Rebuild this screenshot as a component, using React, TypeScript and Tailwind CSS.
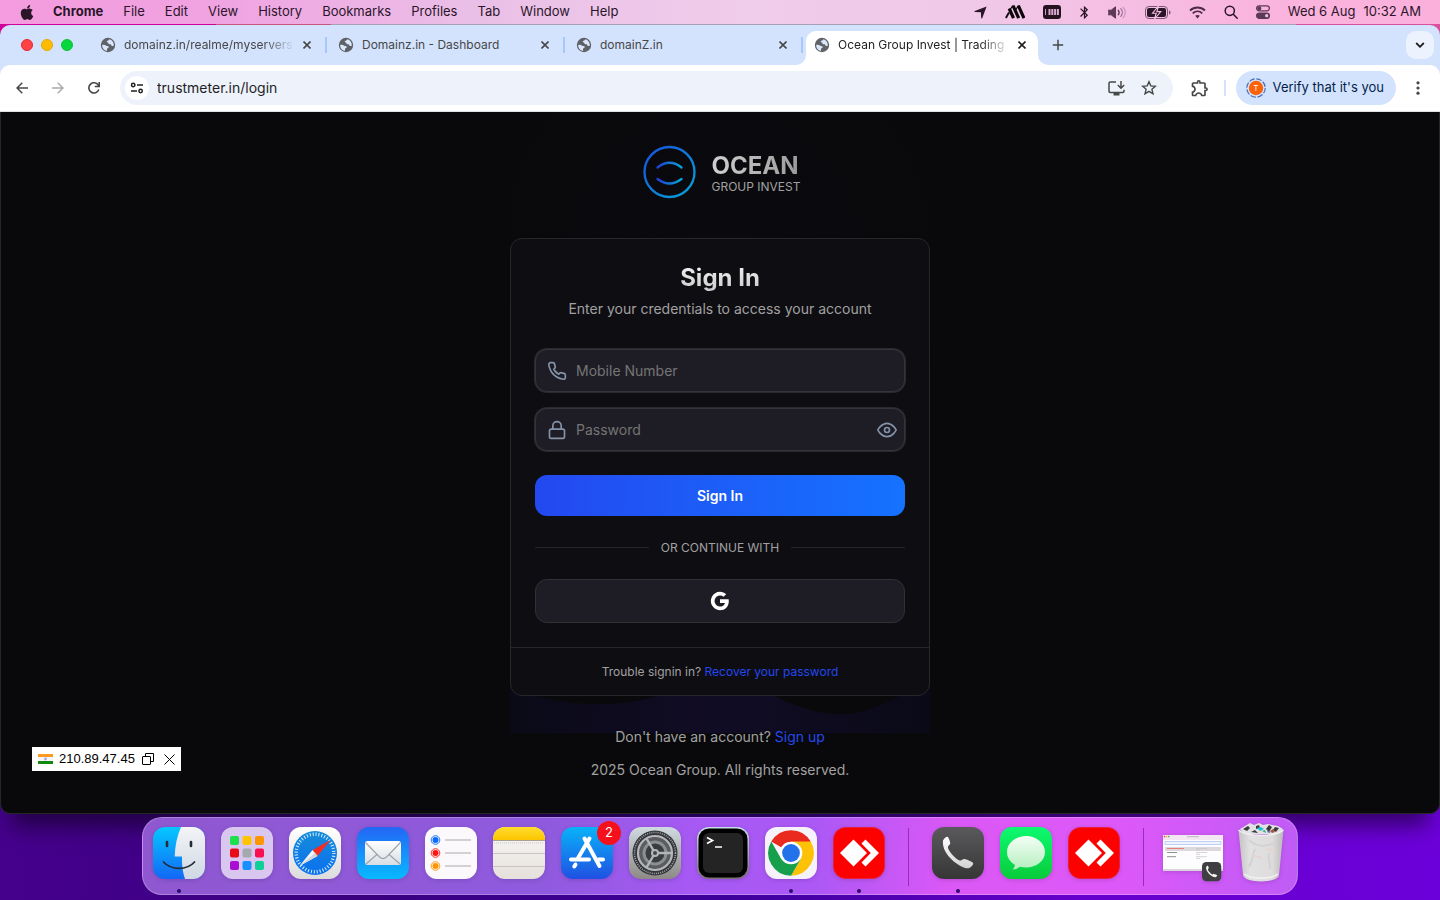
import { useState } from 'react'
import type { ReactNode } from 'react'
import { FiEye, FiLock, FiPhone } from 'react-icons/fi'
import { FaApple } from 'react-icons/fa'
import { RiGoogleFill } from 'react-icons/ri'
import { MdOutlineExtension, MdBluetooth } from 'react-icons/md'

const menus = ['File', 'Edit', 'View', 'History', 'Bookmarks', 'Profiles', 'Tab', 'Window', 'Help']

const tabs = [
  { title: 'domainz.in/realme/myservers', fade: true },
  { title: 'Domainz.in - Dashboard', fade: false },
  { title: 'domainZ.in', fade: false },
]

/* ---------- Menu bar ---------- */

const MenuBar = () => (
  <header className="flex h-6 items-center justify-between bg-[linear-gradient(90deg,#f39bde_0%,#f0a3e1_15%,#eabfe7_33%,#f0cdea_52%,#f0c8e8_68%,#fab4dd_88%,#fbb0dc_100%)] pl-5 pr-[19px] text-[13px] text-[#2b1529]">
    <nav className="flex items-center gap-5">
      <button aria-label="Apple menu" className="w-[13px]">
        <FaApple className="h-[17px] w-[14px]" />
      </button>
      <button className="font-bold">Chrome</button>
      {menus.map((item) => (
        <button key={item}>{item}</button>
      ))}
    </nav>
    <div className="flex items-center gap-[18px]">
      <svg width="13" height="13" viewBox="0 0 13 13" fill="currentColor">
        <path d="M12.6.4 8.2 12.2c-.2.6-.9.5-1-.1L6.9 6.2 1 6C.3 6 .2 5.200.8 5z" />
      </svg>
      <svg width="20" height="14" viewBox="0 0 20 14" fill="none" stroke="#0c060c">
        <path d="M4 7.500.9 13" strokeWidth="1.800" />
        <path d="m4.200 3.500 4.300 9.700M8 .7l5.700 12.500M13.300.7 19 13.200" strokeWidth="3.200" />
        <path d="M5.500 4 8 .5M10.500 5l3-4.500" strokeWidth="1.200" />
      </svg>
      <svg width="18" height="14" viewBox="0 0 18 14">
        <rect width="18" height="14" rx="3" fill="#24131f" />
        <path d="M2 4h.9v6H2zM5.500 4h2v6h-2zM8.300 4h2v6h-2zM11.100 4h2v6h-2zM13.900 4h2v6h-2z" fill="#d9a9cf" />
      </svg>
      <MdBluetooth className="-mx-[2px] h-[15px] w-[15px]" />
      <svg width="19" height="13" viewBox="0 0 19 13" fill="none" stroke="currentColor" strokeLinecap="round">
        <path d="M.5 4.200h2.700L7.500.8v11.400L3.200 8.800H.5z" fill="#5d3a57" stroke="#5d3a57" strokeLinejoin="round" />
        <path d="M10.300 4.300c1 1.300 1 3.100 0 4.400" stroke="#5d3a57" strokeWidth="1.300" />
        <path d="M12.800 2.700c2 2.200 2 5.400 0 7.600" stroke="#9b6c92" strokeWidth="1.200" />
        <path d="M15.200 1.300c2.800 3 2.800 7.400 0 10.400" stroke="#c592b9" strokeWidth="1.100" />
      </svg>
      <svg width="26" height="13" viewBox="0 0 26 13">
        <rect x=".5" y=".5" width="22" height="12" rx="3.500" fill="none" stroke="#7b5575" />
        <rect x="2" y="2" width="19" height="9" rx="2" fill="#2b1529" />
        <path d="M24 4.500v4c1.200-.4 1.500-1 1.500-2s-.3-1.600-1.500-2z" fill="#7b5575" />
        <path d="M13.500 0 7.500 7.200h3.700L9.500 13l6.300-7.400h-3.900z" fill="#2b1529" stroke="#f3bfe3" strokeWidth="1.100" />
      </svg>
      <svg width="17" height="13" viewBox="0 0 17 13" fill="none" stroke="#4a2c45" strokeWidth="1.800">
        <path d="M1 4.500c4.300-4 10.700-4 15 0" />
        <path d="M3.700 7.300c2.800-2.500 6.800-2.500 9.600 0" />
        <path d="m8.500 12.500-2.300-2.700c1.400-1.100 3.200-1.100 4.600 0z" fill="#4a2c45" stroke="none" />
      </svg>
      <svg width="14" height="14" viewBox="0 0 14 14" fill="none" stroke="currentColor" strokeWidth="1.500" strokeLinecap="round">
        <circle cx="5.800" cy="5.800" r="4.600" />
        <path d="m9.300 9.300 3.900 3.900" />
      </svg>
      <svg width="14" height="14" viewBox="0 0 14 14" fill="none" stroke="#5d3a57" strokeWidth="1.200">
        <rect x=".6" y=".8" width="12.800" height="5" rx="2.500" />
        <circle cx="3.300" cy="3.300" r="1.500" fill="#5d3a57" />
        <rect x=".6" y="8" width="12.800" height="5.400" rx="2.700" fill="#5d3a57" />
        <circle cx="10.700" cy="10.700" r="1.600" fill="#f3c3e4" stroke="none" />
      </svg>
      <time className="flex gap-2">
        <span>Wed 6 Aug</span>
        <span>10:32 AM</span>
      </time>
    </div>
  </header>
)

/* ---------- Browser chrome ---------- */

const GlobeIcon = () => (
  <svg className="shrink-0" width="16" height="16" viewBox="0 0 16 16">
    <circle cx="8" cy="8" r="7.200" fill="#5f6368" />
    <path d="M2.200 7.900c1.700-.2 3-.1 4 .8.600.6 1.800.1 2.400.8.500.7-.2 1.600-1 1.800-.8.300-.7 1.200-.5 2.500C4.200 13.500 2.100 11 2.200 7.900z" fill="#d9e6fb" />
    <path d="M9.300 2.300c-.4 1.200-1.500 1.200-2.300 1.800-.6.600.1 1.300.8 1.400.9.200.3 1.400 1.200 1.700.9.300 1.300-.4 2 .2.600.5.300 1.500 1.200 1.600.6.100 1.300-.2 1.600-.6.200-3-1.700-5.400-4.500-6.100z" fill="#d9e6fb" />
  </svg>
)

const CloseIcon = () => (
  <svg width="8" height="8" viewBox="0 0 8 8" fill="none" stroke="currentColor" strokeWidth="1.600">
    <path d="m.5.500 7 7m0-7-7 7" />
  </svg>
)

interface TabProps {
  title: string
  fade: boolean
}

const Tab = ({ title, fade }: TabProps) => (
  <div className="flex w-[238px] items-center pl-[11px] text-[#474747]">
    <GlobeIcon />
    <span
      className={`ml-2 min-w-0 flex-1 whitespace-nowrap text-xs ${
        fade ? '[mask-image:linear-gradient(to_right,black_82%,transparent)]' : ''
      }`}
    >
      {title}
    </span>
    <button aria-label="Close tab" className="ml-1 flex h-4 w-4 items-center justify-center">
      <CloseIcon />
    </button>
    <span className="ml-[10px] h-4 w-[2px] bg-[#a8c7fa]" />
  </div>
)

const TabStrip = () => (
  <div className="flex h-10 bg-[#d3e3fd] pl-[21px] pr-[6px]">
    <div className="flex w-[68px] items-center gap-2">
      <button aria-label="Close" className="h-3 w-3 rounded-full border border-[#e8252b] bg-[#ff4245]" />
      <button aria-label="Minimize" className="h-3 w-3 rounded-full border border-[#e9a600] bg-[#fdbc02]" />
      <button aria-label="Zoom" className="h-3 w-3 rounded-full border border-[#0fbf37] bg-[#05d73f]" />
    </div>
    {tabs.map((tab) => (
      <Tab key={tab.title} {...tab} />
    ))}
    <div className="relative ml-[3px] mt-[6px] flex w-[232px] items-center rounded-t-[10px] bg-white pb-[6px] pl-2 pr-2 text-[#1f1f1f]">
      <svg className="absolute -left-[10px] bottom-0" width="10" height="10" viewBox="0 0 10 10">
        <path d="M10 0v10H0A10 10 0 0 0 10 0z" fill="#fff" />
      </svg>
      <svg className="absolute -right-[10px] bottom-0" width="10" height="10" viewBox="0 0 10 10">
        <path d="M0 0v10h10A10 10 0 0 1 0 0z" fill="#fff" />
      </svg>
      <GlobeIcon />
      <span className="ml-2 min-w-0 flex-1 whitespace-nowrap text-xs [mask-image:linear-gradient(to_right,black_82%,transparent)]">
        Ocean Group Invest | Trading
      </span>
      <button aria-label="Close tab" className="ml-1 flex h-4 w-4 items-center justify-center">
        <CloseIcon />
      </button>
    </div>
    <button aria-label="New tab" className="ml-[14px] text-[#474747]">
      <svg width="12" height="12" viewBox="0 0 12 12" stroke="currentColor" strokeWidth="1.500">
        <path d="M6 .8v10.400M.8 6h10.400" />
      </svg>
    </button>
    <button aria-label="Search tabs" className="ml-auto flex h-7 w-7 items-center justify-center self-center rounded-[10px] bg-[#edf3fe]">
      <svg width="10" height="6" viewBox="0 0 10 6" fill="none" stroke="#1f1f1f" strokeWidth="1.800">
        <path d="m1.200 1 3.800 3.800L8.800 1" />
      </svg>
    </button>
  </div>
)

const Toolbar = () => (
  <div className="bg-[#d3e3fd]">
    <div className="flex h-[47px] items-center rounded-t-[10px] border-b border-[#dfe1e5] bg-white pl-4 pr-5 text-[#474747]">
      <div className="flex w-[104px] items-center gap-6">
        <button aria-label="Back">
          <svg width="12" height="12" viewBox="0 0 12 12" fill="none" stroke="currentColor" strokeWidth="1.500">
            <path d="M12 6H1.200M6.300.7 1 6l5.300 5.300" />
          </svg>
        </button>
        <button aria-label="Forward" className="text-[#ababab]">
          <svg width="12" height="12" viewBox="0 0 12 12" fill="none" stroke="currentColor" strokeWidth="1.500">
            <path d="M0 6h10.800M5.700.7 11 6l-5.300 5.300" />
          </svg>
        </button>
        <button aria-label="Reload">
          <svg width="12" height="12" viewBox="0 0 12 12" fill="none" stroke="currentColor" strokeWidth="1.600">
            <path d="M10.800 7.500A5.100 5.100 0 1 1 10.200 3l.8 1.200" />
            <path d="M11.200 0v4.500H6.800" />
          </svg>
        </button>
      </div>
      <div className="flex h-[34px] flex-1 items-center rounded-full bg-[#edf2fb] pl-[5px] pr-4">
        <button aria-label="View site information" className="flex h-6 w-6 items-center justify-center rounded-full bg-white">
          <svg width="14" height="12" viewBox="0 0 14 12" fill="none" stroke="#1f1f1f" strokeWidth="1.500">
            <circle cx="3.200" cy="3" r="1.700" />
            <path d="M7 3h6M1 9h6" />
            <circle cx="10.600" cy="9" r="1.700" />
          </svg>
        </button>
        <input
          type="text"
          aria-label="Address and search bar"
          defaultValue="trustmeter.in/login"
          className="min-w-0 flex-1 bg-transparent px-2 text-sm text-[#1f1f1f] outline-none"
        />
        <button aria-label="Install app" className="mr-4">
          <svg width="17" height="15" viewBox="0 0 17 15" fill="none" stroke="currentColor" strokeWidth="1.500">
            <path d="M8 1H2.200C1.300 1 1 1.400 1 2.200v8.100c0 .8.300 1.200 1.200 1.200h12.600c.9 0 1.200-.4 1.200-1.200V8.800" />
            <path d="M13 0v6.800M9.800 4 13 7.200 16.200 4" />
            <path d="M5.500 13.300h6" strokeWidth="2.400" />
          </svg>
        </button>
        <button aria-label="Bookmark this tab">
          <svg width="16" height="16" viewBox="0 0 16 16" fill="none" stroke="currentColor" strokeWidth="1.400">
            <path d="m8 1.700 1.800 4.200 4.600.4-3.500 3 1.100 4.500L8 11.400l-4 2.400 1.100-4.500-3.500-3 4.600-.4z" />
          </svg>
        </button>
      </div>
      <button aria-label="Extensions" className="ml-[17px]">
        <MdOutlineExtension className="h-5 w-5" />
      </button>
      <span className="ml-[14px] mr-[10px] h-4 w-[2px] bg-[#d3e3fd]" />
      <button className="flex h-[34px] items-center gap-[7px] rounded-full bg-[#d3e3fd] pl-[10px] pr-3 text-[13px] text-[#041e49]">
        <svg width="20" height="20" viewBox="0 0 20 20">
          <circle cx="10" cy="10" r="9.200" fill="none" stroke="#4b6fb3" strokeWidth="1.200" strokeDasharray="5.600 1.630" />
          <circle cx="10" cy="10" r="7.200" fill="#fb6107" />
          <text x="10" y="12.700" textAnchor="middle" fontSize="7.500" fill="#fff" fontFamily="Inter, sans-serif">
            T
          </text>
        </svg>
        Verify that it's you
      </button>
      <button aria-label="More" className="ml-5">
        <svg width="4" height="16" viewBox="0 0 4 16" fill="currentColor">
          <circle cx="2" cy="2.800" r="1.600" />
          <circle cx="2" cy="8" r="1.600" />
          <circle cx="2" cy="13.200" r="1.600" />
        </svg>
      </button>
    </div>
  </div>
)

/* ---------- Login page ---------- */

const Logo = () => (
  <div className="flex items-center gap-3">
    <svg width="60" height="60" viewBox="-.5 0 60 60" fill="none" strokeWidth="2.300" strokeLinecap="round">
      <defs>
        <linearGradient id="ocean" x1="0" y1="0" x2="1" y2="1">
          <stop offset="0" stopColor="#1750dc" />
          <stop offset="1" stopColor="#06a5d8" />
        </linearGradient>
        <linearGradient id="oceanArc" x1="0" y1="0" x2="1" y2="0">
          <stop offset="0" stopColor="#2040d8" />
          <stop offset="1" stopColor="#06a5d8" />
        </linearGradient>
      </defs>
      <circle cx="30" cy="30" r="25" stroke="url(#ocean)" />
      <path d="M18 25.500q12-9.500 24 0" stroke="url(#oceanArc)" />
      <path d="M18 37q12 9 24 0" stroke="url(#oceanArc)" />
    </svg>
    <div className="pt-[2px]">
      <div className="bg-gradient-to-r from-[#d0d0d0] to-[#9a9a9a] bg-clip-text text-2xl font-bold leading-7 text-transparent">
        OCEAN
      </div>
      <div className="text-xs leading-[14px] text-[#a1a1a1]">GROUP INVEST</div>
    </div>
  </div>
)

const fieldClass =
  'flex h-[43px] items-center gap-[9px] rounded-xl border border-[#34343a] bg-[#1e1d25] pl-[11px] pr-[7px] text-[#8493a8] ring-1 ring-[#29292e]'
const inputClass = 'min-w-0 flex-1 bg-transparent text-sm text-white outline-none placeholder:text-[#757575]'

const LoginPage = () => {
  const [showPassword, setShowPassword] = useState(false)

  return (
    <main className="relative z-0 flex flex-1 flex-col items-center rounded-b-[10px] border border-t-0 border-[#27272a] bg-[#09090b] bg-[radial-gradient(circle_at_50%_20%,#0a0a0f_0,#09090b_260px)] pb-[33px] pt-[30px] text-[#a1a1a1] shadow-[0_24px_20px_-12px_rgba(0,0,0,0.5)]">
      <Logo />

      <section className="relative mt-9 w-[420px] max-w-full">
        <svg className="absolute left-0 top-full -z-10 -mt-5 h-[57px] w-full" viewBox="0 0 420 57" preserveAspectRatio="none">
          <defs>
            <linearGradient id="wave" x1="0" y1="0" x2="1" y2="0">
              <stop offset="0" stopColor="#0a0a17" />
              <stop offset=".5" stopColor="#110c25" />
              <stop offset="1" stopColor="#0a0a17" />
            </linearGradient>
          </defs>
          <path d="M0 12C40 26 80 32 120 26C170 18 210 -4 262 19C295 35 315 39 335 38C365 37 385 20 420 8V57H0z" fill="url(#wave)" />
        </svg>
        <div className="rounded-xl border border-[#27272a] bg-[#0e0d12]">
          <form className="p-6" onSubmit={(e) => e.preventDefault()}>
            <div className="mb-[30px] text-center">
              <h1 className="bg-gradient-to-b from-[#f4f4f4] to-[#c8c8c8] bg-clip-text text-2xl font-bold leading-[30px] text-transparent">
                Sign In
              </h1>
              <p className="mt-[6px] text-sm">Enter your credentials to access your account</p>
            </div>

            <div className="flex flex-col gap-4">
              <label className={fieldClass}>
                <FiPhone className="h-5 w-5 shrink-0" />
                <input type="tel" aria-label="Mobile Number" placeholder="Mobile Number" className={inputClass} />
              </label>
              <div className={fieldClass}>
                <FiLock className="h-5 w-5 shrink-0" />
                <input
                  type={showPassword ? 'text' : 'password'}
                  aria-label="Password"
                  placeholder="Password"
                  className={inputClass}
                />
                <button type="button" aria-label="Show password" onClick={() => setShowPassword(!showPassword)}>
                  <FiEye className="h-5 w-5" />
                </button>
              </div>
            </div>

            <button
              type="submit"
              className="mt-6 h-[41px] w-full rounded-xl bg-gradient-to-r from-[#2348f0] to-[#1572ff] text-sm font-semibold text-white"
            >
              Sign In
            </button>

            <div className="my-6 flex items-center gap-3 text-xs leading-[15px]">
              <span className="h-px flex-1 bg-[#27272a]" />
              OR CONTINUE WITH
              <span className="h-px flex-1 bg-[#27272a]" />
            </div>

            <button
              type="button"
              aria-label="Continue with Google"
              className="flex h-11 w-full items-center justify-center rounded-xl border border-[#303036] bg-[#1e1d25] text-white"
            >
              <RiGoogleFill className="h-[22px] w-[22px]" />
            </button>
          </form>
          <p className="border-t border-[#27272a] py-4 text-center text-xs leading-[15px]">
            Trouble signin in?{' '}
            <a href="#recover" className="text-[#2348f0]">
              Recover your password
            </a>
          </p>
        </div>
      </section>

      <p className="mt-[31px] text-sm">
        Don't have an account?{' '}
        <a href="#signup" className="text-[#2348f0]">
          Sign up
        </a>
      </p>
      <p className="mt-[13px] text-sm">2025 Ocean Group. All rights reserved.</p>

      <IpBadge />
    </main>
  )
}

// floats over the page, added by a browser extension
const IpBadge = () => (
  <div className="absolute bottom-[42px] left-[31px] flex h-6 items-center bg-white px-[6px] font-['Liberation_Sans',sans-serif] text-[13px] text-black">
    <svg width="15" height="10" viewBox="0 0 15 10">
      <rect width="15" height="3" fill="#ff9a1f" />
      <rect y="3" width="15" height="4" fill="#f4f4fa" />
      <rect y="7" width="15" height="3" fill="#12880f" />
      <circle cx="7.500" cy="5" r="1.400" fill="#a9a6dd" />
    </svg>
    <span className="ml-[6px]">210.89.47.45</span>
    <button aria-label="Copy" className="ml-[7px]">
      <svg width="12" height="12" viewBox="0 0 12 12" fill="none" stroke="#000">
        <rect x=".5" y="3.500" width="8" height="8" rx=".5" />
        <path d="M3.500 3.500v-3h8v8h-3" />
      </svg>
    </button>
    <button aria-label="Close" className="ml-[10px]">
      <svg width="11" height="11" viewBox="0 0 11 11" stroke="#000">
        <path d="m.5.500 10 10m0-10-10 10" />
      </svg>
    </button>
  </div>
)

/* ---------- Dock ---------- */

interface GradProps {
  id: string
  from: string
  to: string
}

const Grad = ({ id, from, to }: GradProps) => (
  <linearGradient id={id} x1="0" y1="0" x2="0" y2="1">
    <stop offset="0" stopColor={from} />
    <stop offset="1" stopColor={to} />
  </linearGradient>
)

interface DockIconProps {
  label: string
  running?: boolean
  badge?: string
  children: ReactNode
}

const DockIcon = ({ label, running, badge, children }: DockIconProps) => (
  <button aria-label={label} className="relative flex flex-col items-center">
    <svg className="overflow-visible drop-shadow-sm" width="52" height="52" viewBox="0 0 52 52" fill="none">
      {children}
    </svg>
    {badge && (
      <span className="absolute -right-2 -top-[6px] flex h-6 w-6 items-center justify-center rounded-full bg-[#f5101c] text-[13px] text-white">
        {badge}
      </span>
    )}
    <span className={`mt-[10px] h-1 w-1 rounded-full ${running ? 'bg-[#2b0a6b]' : ''}`} />
  </button>
)

const launchpad = [
  ['#1ee04c', '#ffc400', '#ff9500'],
  ['#e80c18', '#a5a9ad', '#f90f4f'],
  ['#a80fd0', '#1890ff', '#0fcf98'],
]

const reminders = ['#0a6cff', '#ff1414', '#ff9500']

const HANDSET =
  'M11 13.500c1.300-2.400 3.400-4 4.700-3.600 1 .4 2.500 4.800 2.600 6.300.1 1.400-2.700 2.600-2.400 4.200.6 3.500 6.600 10.800 11.600 13.100 1.700.7 3.300-1.700 4.900-1.400 2.200.4 7.800 2.600 8.700 4 .8 1.400-2.300 4.800-4.900 5.200C29.800 42.100 9.100 28.300 11 13.500z'

const AnyDeskArt = () => (
  <>
    <rect x=".5" y=".5" width="51" height="51" rx="12" fill="#fd0000" stroke="#e5203c" />
    <path d="M7 26 20.500 12.500 34 26 20.500 39.500z" fill="#fff" />
    <path d="m28.500 16.500 4-4L46 26 32.500 39.500l-4-4 9.300-9.500z" fill="#fff" />
  </>
)

const Dock = () => (
  <footer className="relative mx-auto mb-[5px] mt-[3px] flex h-[78px] gap-4 rounded-[20px] border border-white/25 bg-[linear-gradient(95deg,#8f58d0_0%,#8f5ade_35%,#a759f4_48%,#ab58f5_58%,#db58f6_70%,#dd58f8_84%,#bf5cf6_100%)] px-[10px] pt-[9px]">
    <DockIcon label="Finder" running>
      <defs>
        <Grad id="finder" from="#05c8ff" to="#1268f5" />
        <Grad id="finderFace" from="#f3f4f7" to="#cfd8e4" />
        <clipPath id="tile">
          <rect width="52" height="52" rx="12" />
        </clipPath>
      </defs>
      <g clipPath="url(#tile)">
        <rect width="52" height="52" fill="url(#finder)" />
        <path d="M28 0c-4 9-6 19-6.300 29.500H29c-.2 8 .6 16 3 22.500h20V0z" fill="url(#finderFace)" />
      </g>
      <path d="M14 15v4M38 15v4" stroke="#252c36" strokeWidth="2.600" strokeLinecap="round" />
      <path d="M10.500 35c7.500 8.500 23.500 8.500 31 0" stroke="#252c36" strokeWidth="1.700" strokeLinecap="round" />
    </DockIcon>

    <DockIcon label="Launchpad">
      <rect width="52" height="52" rx="12" fill="#d9c7ef" />
      {launchpad.map((row, y) =>
        row.map((color, x) => (
          <rect key={color} x={9 + x * 12.500} y={9 + y * 12.500} width="9" height="9" rx="2" fill={color} />
        ))
      )}
    </DockIcon>

    <DockIcon label="Safari">
      <defs>
        <Grad id="safariTile" from="#ffffff" to="#dcdcdc" />
        <Grad id="safari" from="#168cd8" to="#0a70f0" />
      </defs>
      <rect width="52" height="52" rx="12" fill="url(#safariTile)" />
      <circle cx="26" cy="26" r="22" fill="url(#safari)" />
      <circle cx="26" cy="26" r="18.800" stroke="#d6efff" strokeWidth="3.400" strokeDasharray="1 1.953" />
      <path d="m41.500 13-13 16-5-6z" fill="#fb2a20" />
      <path d="m10.500 39 13-16 5 6z" fill="#f4f4f4" />
      <path d="m10.500 39 18-10-2.500-3z" fill="#cfd5da" />
    </DockIcon>

    <DockIcon label="Mail">
      <defs>
        <Grad id="mail" from="#2466f5" to="#08b9ff" />
        <Grad id="envelope" from="#ffffff" to="#d9dde2" />
      </defs>
      <rect width="52" height="52" rx="12" fill="url(#mail)" />
      <rect x="8" y="14" width="36" height="24" rx="2.500" fill="url(#envelope)" />
      <path d="m8.500 15.500 14 14.500c2.200 2 4.800 2 7 0l14-14.500M9 37l11.500-10M43 37 31.500 27" stroke="#9ba3ac" strokeWidth="1.100" />
    </DockIcon>

    <DockIcon label="Reminders">
      <rect width="52" height="52" rx="12" fill="#fbf9fb" />
      {reminders.map((color, i) => (
        <g key={color}>
          <circle cx="10.500" cy={13 + i * 13} r="3" fill={color} />
          <circle cx="10.500" cy={13 + i * 13} r="4.300" stroke={color} strokeWidth=".9" />
          <path d={`M20 ${13 + i * 13}h26`} stroke="#c9c7ca" strokeWidth="1.600" />
        </g>
      ))}
    </DockIcon>

    <DockIcon label="Notes">
      <defs>
        <Grad id="notes" from="#f8f7f5" to="#e6e0dc" />
        <Grad id="notesTop" from="#ffdd2e" to="#fcc400" />
      </defs>
      <g clipPath="url(#tile)">
        <rect width="52" height="52" fill="url(#notes)" />
        <rect width="52" height="13" fill="url(#notesTop)" />
        <path d="M0 13.500h52" stroke="#a9a192" />
        <path d="M1 16h50" stroke="#c9c5c0" strokeDasharray="1 1" />
        <path d="M0 26.500h52M0 39.500h52" stroke="#c9c5c1" />
      </g>
    </DockIcon>

    <DockIcon label="App Store" badge="2">
      <defs>
        <Grad id="store" from="#08b3f8" to="#2050e2" />
      </defs>
      <rect width="52" height="52" rx="12" fill="url(#store)" />
      <path d="M28.500 11.500 16.500 32M23.500 11.500l15 27.500M10 32.500h18M37.500 32.500H42M14.500 37.500l-1.200 2" stroke="#fff" strokeWidth="4" strokeLinecap="round" />
    </DockIcon>

    <DockIcon label="System Settings">
      <defs>
        <Grad id="settings" from="#cfdae0" to="#8d8985" />
      </defs>
      <rect width="52" height="52" rx="12" fill="url(#settings)" />
      <circle cx="26" cy="26" r="22.500" fill="#34363a" />
      <circle cx="26" cy="26" r="20.500" stroke="#a5a8aa" strokeWidth="1.600" strokeDasharray="1 1.146" />
      <circle cx="26" cy="26" r="17" fill="#5a5c5f" stroke="#b4b7b9" strokeWidth="2.200" />
      <circle cx="26" cy="26" r="11" fill="#3a3c3f" stroke="#8c8f91" strokeWidth="3" />
      <path d="M26 26 17.500 11.500M26 26h17M26 26l-8.500 14.500" stroke="#b4b7b9" strokeWidth="2.400" />
      <circle cx="26" cy="26" r="4" fill="#b4b7b9" />
      <circle cx="26" cy="26" r="2" fill="#45474a" />
    </DockIcon>

    <DockIcon label="Terminal">
      <defs>
        <Grad id="terminal" from="#c6e2e8" to="#77716f" />
      </defs>
      <rect width="52" height="52" rx="12" fill="url(#terminal)" />
      <rect x="1.500" y="1.500" width="49" height="49" rx="10.500" fill="#000" />
      <rect x="6" y="6" width="40" height="40" rx="6" fill="#242424" />
      <path d="m10 10.500 5.500 3-5.500 3M18 20h7" stroke="#fff" strokeWidth="1.700" />
    </DockIcon>

    <DockIcon label="Chrome" running>
      <rect width="52" height="52" rx="12" fill="#f6f2fb" />
      <path d="M26 26 6.300 14.600A22.700 22.700 0 0 1 45.700 14.600z" fill="#ea2a1f" />
      <path d="M26 14.600h19.700A22.700 22.700 0 0 1 26 48.700l9.900-17z" fill="#fdc105" />
      <path d="M16.100 31.700 6.300 14.600A22.700 22.700 0 0 0 26 48.700l9.900-17z" fill="#17a04b" />
      <circle cx="26" cy="26" r="11.300" fill="#fff" />
      <circle cx="26" cy="26" r="8.900" fill="#2372ea" />
    </DockIcon>

    <DockIcon label="AnyDesk" running>
      <AnyDeskArt />
    </DockIcon>

    <span className="mx-[7px] mt-px h-[58px] w-px bg-[#9a2bc0]" />

    <DockIcon label="Phone" running>
      <defs>
        <Grad id="phone" from="#5a595b" to="#373637" />
        <Grad id="handset" from="#ffffff" to="#d2d2d2" />
      </defs>
      <rect width="52" height="52" rx="12" fill="url(#phone)" />
      <path d={HANDSET} fill="url(#handset)" />
    </DockIcon>

    <DockIcon label="Messages">
      <defs>
        <Grad id="messages" from="#0dfa70" to="#08cb3a" />
        <Grad id="bubble" from="#f4fff6" to="#b5eebf" />
      </defs>
      <rect width="52" height="52" rx="12" fill="url(#messages)" />
      <path d="M26 9C15.500 9 7 16 7 25c0 5.500 3.200 10 8 13-.3 1.800-1.200 3.200-2.500 4.500 3 0 5.500-1.200 7.500-2.800 2 .5 4 .8 6 .8 10.500 0 19-6.700 19-15.500S36.500 9 26 9z" fill="url(#bubble)" />
    </DockIcon>

    <DockIcon label="AnyDesk session">
      <AnyDeskArt />
    </DockIcon>

    <span className="mx-[7px] mt-px h-[58px] w-px bg-[#9a2bc0]" />

    <DockIcon label="Minimized window">
      <rect x="-4" y="8" width="60" height="36" fill="#fdfcfe" />
      <rect x="-4" y="8" width="60" height="5" fill="#f3e8f2" />
      <circle cx="-2.500" cy="9.600" r=".8" fill="#f04040" />
      <circle cx="-.4" cy="9.600" r=".8" fill="#f0b020" />
      <circle cx="1.700" cy="9.600" r=".8" fill="#30c040" />
      <path d="M20 9.700h12" stroke="#b0a8b0" strokeWidth=".8" />
      <rect x="-2" y="14.500" width="56" height="3" fill="#eef3ff" stroke="#a9bff0" strokeWidth=".7" />
      <rect x="-2" y="20" width="56" height="4" fill="#dcd9dc" />
      <path d="M0 21.500h17" stroke="#ee7d7d" />
      <path d="M0 25.500h10M0 29.700h9" stroke="#858585" strokeWidth=".9" />
      <path d="M29 21.500h11M29 25.500h11M29 29.700h11M29 23.200h4M29 27.300h4M29 31.400h4" stroke="#c6c2c6" strokeWidth=".7" />
      <rect x="-4" y="42" width="60" height="2" fill="#dcd3dd" />
      <g transform="translate(35 35) scale(.37)">
        <rect width="52" height="52" rx="12" fill="#3f3e40" />
        <path d={HANDSET} fill="#f2f2f2" />
      </g>
    </DockIcon>

    <DockIcon label="Trash">
      <defs>
        <linearGradient id="trash" x1="0" y1="0" x2="1" y2="0">
          <stop offset="0" stopColor="#c4c2c4" />
          <stop offset=".25" stopColor="#e2e1e1" />
          <stop offset=".75" stopColor="#dedcdc" />
          <stop offset="1" stopColor="#bab8ba" />
        </linearGradient>
      </defs>
      <path d="M5 2 10-1l5-3 4 2 5-2 4 2 5-1 4 1 6 1 5 3-4 5H9z" fill="#e2e2e5" />
      <path d="m8 2 5-3 2 2-3 3zM21-1l3-1 1 3-4 1zM31 2l3-4 3 2-3 5zM40 0l4 1-3 4-3-2zM16 5l4-2 3 3z" fill="#3b3a3d" />
      <path d="m22 1 4-1 3 2-4 2z" fill="#19c3d6" />
      <path d="m27 4 3-1 1 3z" fill="#35b36a" />
      <path d="m35 4 3-2 2 3-3 1z" fill="#a8563c" />
      <path d="m32 5 2-2 1 3z" fill="#4058c0" />
      <path d="M3.500 3C11 10 41 10 48.500 3L44 48c-.8 8.500-35.200 8.500-36 0z" fill="url(#trash)" />
      <path d="M3.500 3C11 10 41 10 48.500 3" stroke="#f2f2f2" strokeWidth="1.300" />
      <path d="M9.500 47c6 5.500 27 5.500 33 0" stroke="#f4f4f4" strokeWidth="1.500" />
      <path d="M14 13c6 6 16 8 25 3M14 40c4-6 3-12 6-18M35 42c1-6-3-9-1-16" stroke="#d4d2d2" strokeWidth="2" />
      <path d="M18 28c3 2 6 1 8 3M32 22c3 0 5 1 6 3" stroke="#e4d3d0" strokeWidth="2" />
    </DockIcon>
  </footer>
)

export default function App() {
  return (
    <div className="flex min-h-screen flex-col bg-[linear-gradient(180deg,#d0009b_0%,#d0009b_6%,transparent_7%),linear-gradient(90deg,#45008c_0%,#3a0080_25%,#3d009a_50%,#6600cc_75%,#6c00da_100%)] font-['Inter',sans-serif] antialiased">
      <MenuBar />
      <div className="flex flex-1 flex-col bg-[linear-gradient(90deg,#d0009b_0_15%,#c8567e_15%_23%,#a79fb4_23%_90%,#d9509b_90%)] bg-[length:100%_12px] bg-no-repeat pt-px">
        <div className="flex flex-1 flex-col rounded-t-[10px]">
          <div className="overflow-hidden rounded-t-[10px]">
            <TabStrip />
            <Toolbar />
          </div>
          <LoginPage />
        </div>
      </div>
      <Dock />
    </div>
  )
}
